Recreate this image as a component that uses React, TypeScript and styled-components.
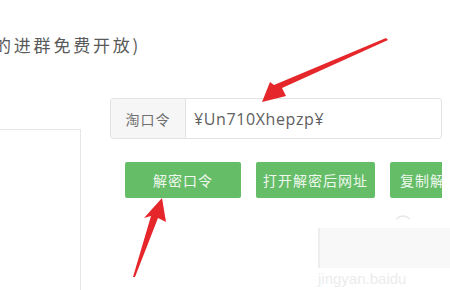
import styled, { createGlobalStyle } from 'styled-components'

const GlobalStyle = createGlobalStyle`
  html, body {
    margin: 0;
    padding: 0;
    background: #fff;
  }
  body {
    font-family: "Noto Sans CJK SC", "Liberation Sans", sans-serif;
  }
`

const Page = styled.div`
  position: relative;
  width: 450px;
  height: 290px;
  overflow: hidden;
  background: #fff;
`

const Notice = styled.div`
  padding-top: 35px;
  margin-left: -6px;
  font-size: 17px;
  line-height: 20px;
  letter-spacing: 2.8px;
  color: #5a5a5a;
  white-space: nowrap;
`

const Body = styled.div`
  display: flex;
  margin-top: 43px;
  height: 200px;
`

const SidePanel = styled.div`
  flex: none;
  width: 80px;
  margin-top: 31px;
  border-top: 1px solid #e6e6e6;
  border-right: 1px solid #e6e6e6;
`

const Main = styled.div`
  flex: none;
  width: 332px;
  margin-left: 29px;
  overflow: hidden;
`

const InputGroup = styled.div`
  display: flex;
  height: 39px;
  border: 1px solid #e3e3e3;
  border-radius: 3px;
  overflow: hidden;
`

const Addon = styled.div`
  width: 74px;
  display: flex;
  align-items: center;
  justify-content: center;
  background: #f6f6f6;
  border-right: 1px solid #e3e3e3;
  color: #707070;
  font-size: 14px;
  letter-spacing: 1px;
`

const Field = styled.div`
  flex: 1;
  display: flex;
  align-items: center;
  padding-left: 8px;
  color: #606060;
  font-size: 16px;
  letter-spacing: 0.6px;
  font-family: "Open Sans", "Noto Sans CJK SC", sans-serif;
`

const Actions = styled.div`
  display: flex;
  gap: 15px;
  margin-top: 23px;
  padding-left: 15px;
`

const Button = styled.div<{ $w: number }>`
  flex: none;
  width: ${(p) => p.$w}px;
  height: 36px;
  display: flex;
  align-items: center;
  justify-content: center;
  background: #66bd68;
  color: #eef8ee;
  font-size: 14px;
  letter-spacing: 1px;
  border-radius: 2px;
  white-space: nowrap;
  overflow: hidden;
`

const Watermark = styled.div`
  position: absolute;
  left: 318px;
  top: 228px;
  width: 140px;
  height: 40px;
  background: #f8f8f8;
  border-left: 2px solid #ededed;
`

const WatermarkText = styled.div`
  position: absolute;
  left: 318px;
  top: 270px;
  font-size: 15px;
  color: #ececec;
  font-family: "Liberation Sans", sans-serif;
  white-space: nowrap;
`

const Overlay = styled.svg`
  position: absolute;
  left: 0;
  top: 0;
  pointer-events: none;
`

function App() {
  return (
    <Page>
      <GlobalStyle />
      <Notice>的进群免费开放)</Notice>
      <Body>
        <SidePanel />
        <Main>
          <InputGroup>
            <Addon>淘口令</Addon>
            <Field>¥Un710Xhepzp¥</Field>
          </InputGroup>
          <Actions>
            <Button $w={116}>解密口令</Button>
            <Button $w={119}>打开解密后网址</Button>
            <Button $w={80}>复制解密</Button>
          </Actions>
        </Main>
      </Body>
      <Watermark />
      <WatermarkText>jingyan.baidu</WatermarkText>
      <Overlay width="450" height="290" viewBox="0 0 450 290">
        <path d="M396 219 Q403 213 410 219" fill="none" stroke="#e8e8e8" strokeWidth="1.5" />
        <polygon
          points="388,40 282,88 286,96 262,102 270,82 274,85 386,38"
          fill="#e5262a"
        />
        <polygon
          points="133,277 151,216 144,218 162,198 166,222 158,218 135,277"
          fill="#e5262a"
        />
      </Overlay>
    </Page>
  )
}

export default App
